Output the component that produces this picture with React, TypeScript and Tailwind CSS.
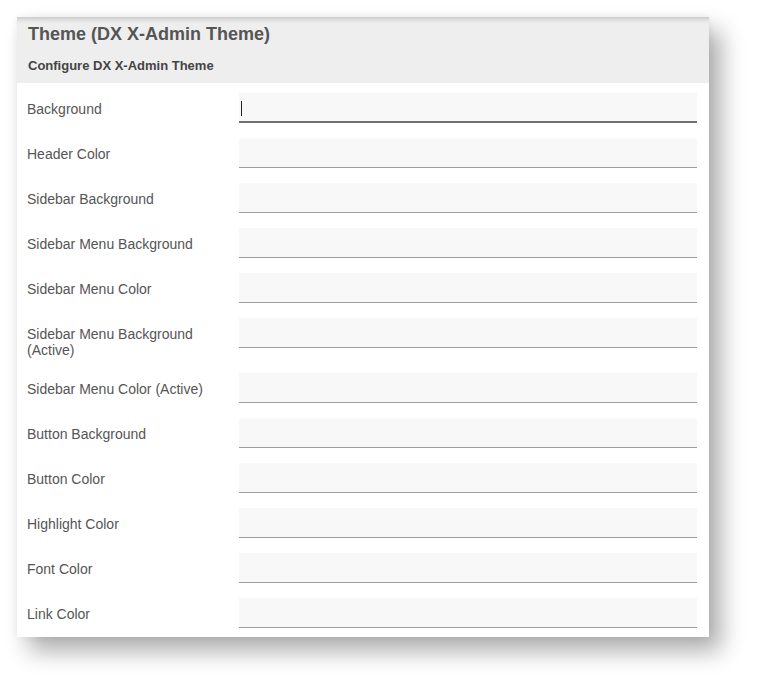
const fields = [
  'Background',
  'Header Color',
  'Sidebar Background',
  'Sidebar Menu Background',
  'Sidebar Menu Color',
  'Sidebar Menu Background (Active)',
  'Sidebar Menu Color (Active)',
  'Button Background',
  'Button Color',
  'Highlight Color',
  'Font Color',
  'Link Color',
];

function Row({ label, focused }: { label: string; focused?: boolean }) {
  return (
    <div className="flex items-start mb-[15px] last:mb-0">
      <label className="w-[212px] shrink-0 pt-[8px] pr-[20px] text-[14px] leading-[16px] text-[#555]">
        {label}
      </label>
      <div
        className={`relative flex-1 h-[30px] bg-[#f8f8f8] ${
          focused ? 'border-b-2 border-[#707070]' : 'border-b border-[#9e9e9e]'
        }`}
      >
        {focused && <span className="absolute left-[2px] top-[8px] w-px h-[15px] bg-[#222]" />}
      </div>
    </div>
  );
}

export default function App() {
  return (
    <div className="min-h-screen bg-white pt-[17px] pl-[17px] font-['Liberation_Sans',Arial,sans-serif]">
      <div className="w-[692px] bg-white shadow-[12px_14px_22px_rgba(0,0,0,0.32),0_0_8px_rgba(0,0,0,0.06)]">
        <div className="h-[66px] bg-[#eeeeee] px-[11px] pt-[6px] shadow-[inset_0_6px_5px_-4px_rgba(0,0,0,0.18)]">
          <h1 className="text-[18px] leading-[22px] font-bold text-[#555]">Theme (DX X-Admin Theme)</h1>
          <h2 className="mt-[13px] text-[13px] leading-[16px] font-bold text-[#444]">Configure DX X-Admin Theme</h2>
        </div>
        <div className="pt-[10px] pb-[9px] pl-[10px] pr-[12px]">
          {fields.map((f, i) => (
            <Row key={f} label={f} focused={i === 0} />
          ))}
        </div>
      </div>
    </div>
  );
}
